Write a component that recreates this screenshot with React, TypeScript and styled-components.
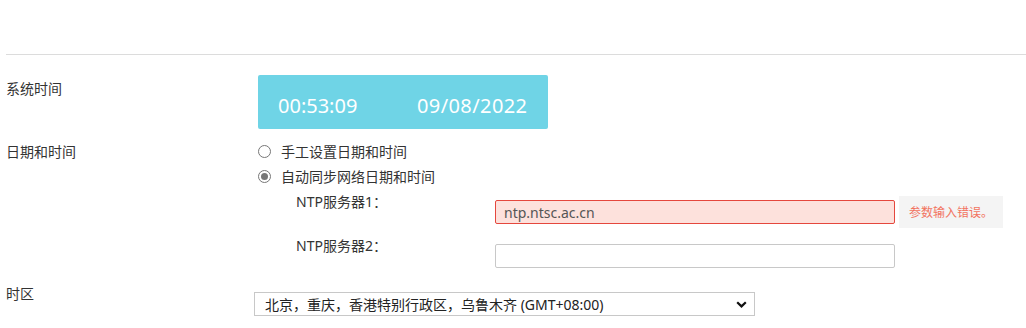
import React from "react";
import styled, { createGlobalStyle } from "styled-components";

const GlobalStyle = createGlobalStyle`
  html, body {
    margin: 0;
    padding: 0;
    background: #fff;
  }
  body {
    font-family: "Noto Sans", "Noto Sans CJK SC", sans-serif;
    font-size: 14px;
    color: #333;
  }
`;

const Page = styled.div`
  padding-left: 6px;
  padding-top: 54px;
`;

const Divider = styled.div`
  height: 1px;
  background: #dcdcdc;
`;

const Row = styled.div<{ $top: number }>`
  display: grid;
  grid-template-columns: 252px 1fr;
  align-items: start;
  margin-top: ${(p) => p.$top}px;
`;

const Label = styled.div<{ $pad?: number }>`
  line-height: 16px;
  padding-top: ${(p) => p.$pad ?? 0}px;
  white-space: nowrap;
`;

const Clock = styled.div`
  width: 290px;
  height: 54px;
  box-sizing: border-box;
  background: #6fd4e6;
  border-radius: 2px;
  display: flex;
  align-items: center;
  padding: 6px 0 0 20px;
  color: #fff;
  font-size: 20px;
`;

const ClockTime = styled.span`
  width: 139px;
`;

const ClockDate = styled.span`
  letter-spacing: 0.4px;
`;

const Options = styled.div`
  display: flex;
  flex-direction: column;
`;

const Option = styled.label`
  display: flex;
  align-items: center;
  height: 25px;
  gap: 10px;
  line-height: 16px;
  cursor: pointer;
`;

const Radio = styled.span<{ $checked?: boolean }>`
  width: 11px;
  height: 11px;
  border: 1px solid #777;
  border-radius: 50%;
  display: inline-flex;
  align-items: center;
  justify-content: center;
  box-sizing: content-box;

  &::after {
    content: "";
    display: ${(p) => (p.$checked ? "block" : "none")};
    width: 7px;
    height: 7px;
    border-radius: 50%;
    background: #777;
  }
`;

const NtpRow = styled.div<{ $top: number }>`
  display: grid;
  grid-template-columns: 199px auto;
  align-items: start;
  margin-top: ${(p) => p.$top}px;
  padding-left: 290px;
`;

const FieldGroup = styled.div`
  display: flex;
  align-items: center;
  min-height: 32px;
  margin-top: 2px;
`;

const TextInput = styled.input<{ $error?: boolean }>`
  width: 400px;
  height: 24px;
  box-sizing: border-box;
  border: 1px solid ${(p) => (p.$error ? "#e5473d" : "#c8c8c8")};
  background: ${(p) => (p.$error ? "#fde1dc" : "#fff")};
  border-radius: 2px;
  padding: 0 8px;
  font-family: "Noto Sans", "Noto Sans CJK SC", sans-serif;
  font-size: 14px;
  color: #555;
  outline: none;
`;

const ErrorTip = styled.div`
  margin-left: 4px;
  height: 32px;
  width: 104px;
  box-sizing: border-box;
  padding-left: 10px;
  display: flex;
  align-items: center;
  background: #f4f4f4;
  color: #f2735f;
  font-size: 12px;
`;

const SelectWrap = styled.div`
  position: relative;
  width: 501px;
  margin-top: 6px;
  margin-left: -4px;
`;

const Select = styled.select`
  width: 100%;
  height: 24px;
  box-sizing: border-box;
  appearance: none;
  border: 1px solid #c8c8c8;
  background: #fff;
  padding: 0 0 0 10px;
  font-family: "Noto Sans", "Noto Sans CJK SC", sans-serif;
  font-size: 14px;
  color: #222;
  outline: none;
`;

const Chevron = styled.svg`
  position: absolute;
  right: 8px;
  top: 9px;
  pointer-events: none;
`;

export default function App() {
  return (
    <>
      <GlobalStyle />
      <Page>
        <Divider />
        <Row $top={20}>
          <Label $pad={6}>系统时间</Label>
          <Clock>
            <ClockTime>00:53:09</ClockTime>
            <ClockDate>09/08/2022</ClockDate>
          </Clock>
        </Row>
        <Row $top={10}>
          <Label $pad={5}>日期和时间</Label>
          <Options>
            <Option>
              <Radio />
              手工设置日期和时间
            </Option>
            <Option>
              <Radio $checked />
              自动同步网络日期和时间
            </Option>
          </Options>
        </Row>
        <NtpRow $top={5}>
          <Label>NTP服务器1：</Label>
          <FieldGroup>
            <TextInput $error defaultValue="ntp.ntsc.ac.cn" />
            <ErrorTip>参数输入错误。</ErrorTip>
          </FieldGroup>
        </NtpRow>
        <NtpRow $top={10}>
          <Label>NTP服务器2：</Label>
          <FieldGroup>
            <TextInput />
          </FieldGroup>
        </NtpRow>
        <Row $top={14}>
          <Label>时区</Label>
          <SelectWrap>
            <Select defaultValue="bj">
              <option value="bj">北京，重庆，香港特别行政区，乌鲁木齐 (GMT+08:00)</option>
            </Select>
            <Chevron width="11" height="7" viewBox="0 0 11 7">
              <path d="M1.2 1.2 L5.5 5.4 L9.8 1.2" fill="none" stroke="#111" strokeWidth="2.2" />
            </Chevron>
          </SelectWrap>
        </Row>
      </Page>
    </>
  );
}
